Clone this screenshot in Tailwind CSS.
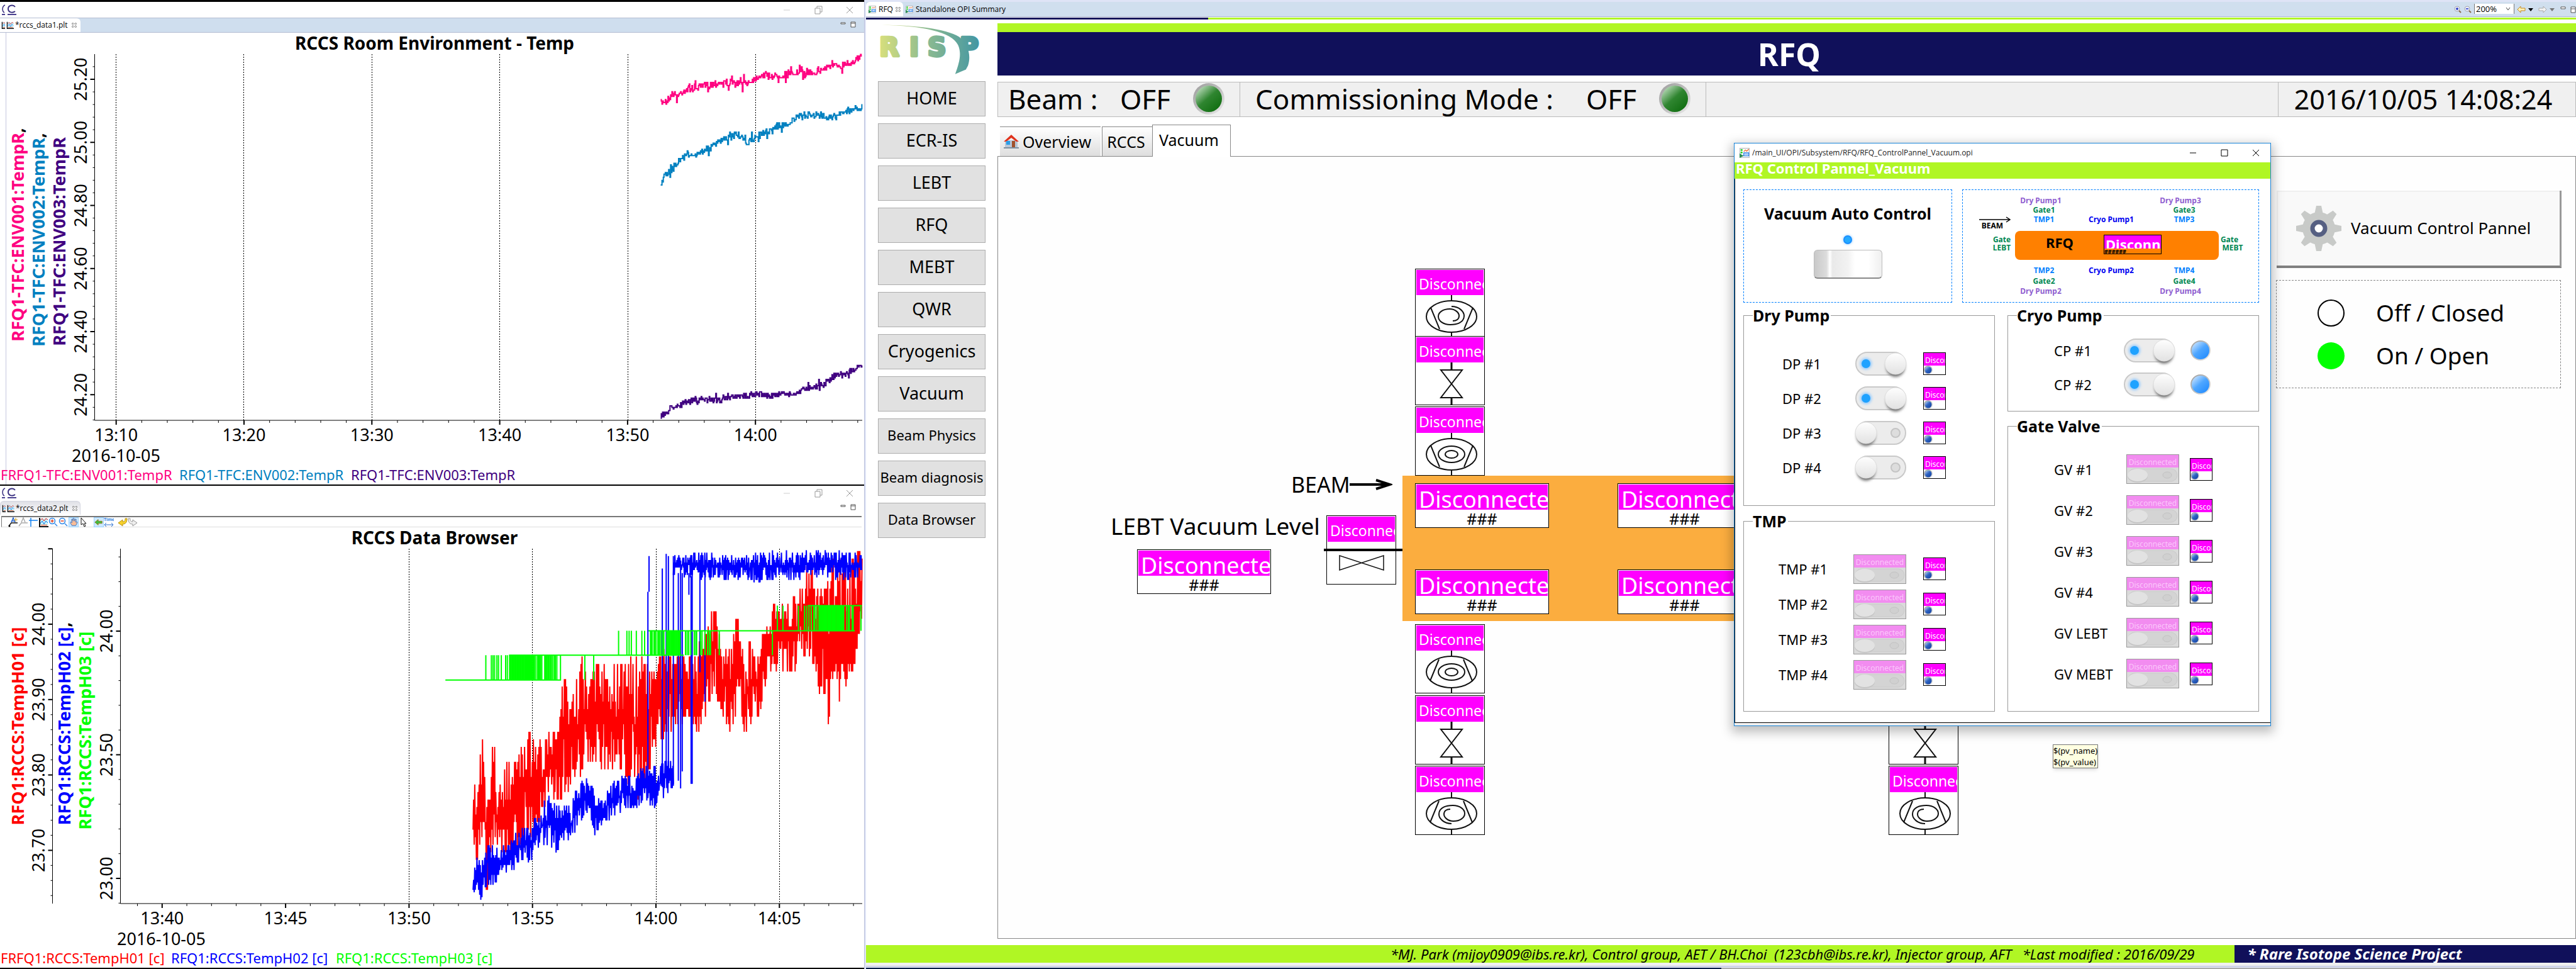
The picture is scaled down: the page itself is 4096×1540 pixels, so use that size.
<!DOCTYPE html>
<html lang="en">
<head>
<meta charset="utf-8">
<title>RFQ Vacuum</title>
<script src="https://cdn.jsdelivr.net/npm/@tailwindcss/browser@4"></script>
</head>
<body class="relative grid h-screen grid-cols-[1375fr_2721fr] overflow-hidden bg-white font-['Noto_Sans',sans-serif] text-black">

<svg class="absolute size-0" aria-hidden="true">
  <defs>
    <linearGradient id="logoFill" gradientUnits="userSpaceOnUse" x1="105" y1="0" x2="825" y2="0"><stop offset="0" stop-color="#d9e07c"/><stop offset=".45" stop-color="#8dbb90"/><stop offset="1" stop-color="#3a92a5"/></linearGradient>
    <linearGradient id="bezel" x1="0" y1="0" x2="1" y2="1"><stop offset="0" stop-color="#9d9d9d"/><stop offset=".5" stop-color="#bdbdbd"/><stop offset="1" stop-color="#eee"/></linearGradient>
    <linearGradient id="greenLed" x1=".1" y1=".1" x2=".8" y2=".9"><stop offset="0" stop-color="#b9dab9"/><stop offset=".5" stop-color="#2f8530"/><stop offset="1" stop-color="#137013"/></linearGradient>
    <linearGradient id="blueLed" x1=".1" y1=".1" x2=".8" y2=".9"><stop offset="0" stop-color="#c3e0ff"/><stop offset=".5" stop-color="#4ea6ff"/><stop offset="1" stop-color="#2990ff"/></linearGradient>
    <linearGradient id="darkLed" x1=".1" y1=".1" x2=".8" y2=".9"><stop offset="0" stop-color="#a9c4ee"/><stop offset=".5" stop-color="#2d62c0"/><stop offset="1" stop-color="#1848a8"/></linearGradient>
    <linearGradient id="knob" x1="0" y1="0" x2="0" y2="1"><stop offset="0" stop-color="#fefefe"/><stop offset="1" stop-color="#e2e2e2"/></linearGradient>
    <filter id="soft" x="-50%" y="-50%" width="200%" height="200%"><feGaussianBlur stdDeviation="2"/></filter>
    <symbol id="plot" viewBox="0 0 16 16"><path d="M2 1v14h14" fill="none" stroke="#111" stroke-width="2"/><path d="M3 2h12v11H3z" fill="#c9f5fb"/><path d="M3 5l3-3 3 4 3-4 3 2" fill="none" stroke="#e01010"/><path d="M3 10l3-4 3 5 3-5 3 3" fill="none" stroke="#0a6ae0"/><path d="M4 12.500h10" stroke="#f04010"/></symbol>
    <symbol id="opi" viewBox="0 0 24 24"><path d="M1 1h22v22H1z" fill="#fff" stroke="#b9bec2" stroke-width="2"/><circle cx="5" cy="5" r="2.500" fill="#2bd42b"/><circle cx="5" cy="11" r="2.500" fill="#2bd42b"/><path d="M10 9l4-4 3 3 5-5" fill="none" stroke="#f07038" stroke-width="2"/><path d="M10 12h12v7H10z" fill="#fff" stroke="#2a7fe8" stroke-width="2"/><path d="M12 15.500h8" stroke="#2a7fe8" stroke-width="2" stroke-dasharray="2 1"/><path d="M0 13l10 6-10 5z" fill="#2c8c55"/></symbol>
    <symbol id="closeX" viewBox="0 0 10 10"><path d="M1 1h2l2 2 2-2h2v2L7 5l2 2v2H7L5 7 3 9H1V7l2-2-2-2z" fill="#fff" stroke="#555"/></symbol>
    <symbol id="brand" viewBox="0 0 28 20"><path d="M8 2C3 4 3 12 7 14" fill="none" stroke="#3a3080" stroke-width="1.500"/><path d="M24 5C21 1 13 2 13 8c0 6 7 7 11 4" fill="none" stroke="#3a3080" stroke-width="2"/><path d="M3 17h5M12 17h14" stroke="#4a4090" stroke-width="2"/></symbol>
  </defs>
</svg>

<div class="grid min-h-0 min-w-0 grid-rows-2 border-r border-[#b9bfda] bg-white">

  <section class="flex min-h-0 flex-col border-t-[3px] border-black" aria-label="RCCS Room Environment">
    <header class="flex h-[25px] shrink-0 items-center justify-between pr-4">
      <svg class="h-5 w-7"><use href="#brand"/></svg>
      <div class="flex items-center gap-9 text-[#999]">
        <button aria-label="Minimize"><svg class="size-3.5" viewBox="0 0 14 14" fill="none" stroke="#ccc"><path d="M2 7h10"/></svg></button>
        <button aria-label="Restore"><svg class="size-3.5" viewBox="0 0 14 14" fill="none" stroke="#999"><path d="M2 4h8v9H2zM5 4V1h8v9h-3"/></svg></button>
        <button aria-label="Close"><svg class="size-3.5" viewBox="0 0 14 14" fill="none" stroke="#999"><path d="M2 2l10 10M12 2L2 12"/></svg></button>
      </div>
    </header>
    <div class="flex h-6 shrink-0 items-stretch justify-between border-y border-[#b5bdd3] bg-[#cfdeee]">
      <div class="flex w-[128px] items-center gap-0.5 rounded-tr-md bg-white pl-0.5 font-['Open_Sans',sans-serif] text-[12px]">
        <svg class="h-3 w-1.5"><use href="#plot" width="12" height="12"/></svg>
        <svg class="size-3"><use href="#plot"/></svg>*rccs_data1.plt
        <button class="ml-1" aria-label="Close tab"><svg class="size-2"><use href="#closeX"/></svg></button>
      </div>
      <svg class="mt-1 mr-3 h-3 w-7" viewBox="0 0 28 12" fill="#fff" stroke="#555"><path d="M3 3h7v2H3zM19 2h7v8h-7zM19 4h7"/></svg>
    </div>
    <svg id="chart1" class="min-h-0 w-full flex-1" viewBox="0 52 1374 718" preserveAspectRatio="xMinYMin meet"></svg>
  </section>

  <section class="flex min-h-0 flex-col border-t-2 border-black" aria-label="RCCS Data Browser">
    <header class="flex h-6 shrink-0 items-center justify-between pr-4">
      <svg class="h-5 w-7"><use href="#brand"/></svg>
      <div class="flex items-center gap-9">
        <button aria-label="Minimize"><svg class="size-3.5" viewBox="0 0 14 14" fill="none" stroke="#ccc"><path d="M2 7h10"/></svg></button>
        <button aria-label="Restore"><svg class="size-3.5" viewBox="0 0 14 14" fill="none" stroke="#999"><path d="M2 4h8v9H2zM5 4V1h8v9h-3"/></svg></button>
        <button aria-label="Close"><svg class="size-3.5" viewBox="0 0 14 14" fill="none" stroke="#999"><path d="M2 2l10 10M12 2L2 12"/></svg></button>
      </div>
    </header>
    <div class="flex h-6 shrink-0 items-start justify-between">
      <div class="flex h-[22px] w-[128px] items-center gap-0.5 rounded-t-md border-x border-t border-[#d4d6e0] bg-linear-to-b from-[#dfe0e6] to-white pl-0.5 font-['Open_Sans',sans-serif] text-[12px]">
        <svg class="h-3 w-1.5"><use href="#plot" width="12" height="12"/></svg>
        <svg class="size-3"><use href="#plot"/></svg>*rccs_data2.plt
        <button class="ml-1" aria-label="Close tab"><svg class="size-2"><use href="#closeX"/></svg></button>
      </div>
      <svg class="mt-1 mr-3 h-3 w-7" viewBox="0 0 28 12" fill="#fff" stroke="#555"><path d="M3 3h7v2H3zM19 2h7v8h-7zM19 4h7"/></svg>
    </div>
    <div class="mr-1 ml-0.5 flex h-[18px] shrink-0 items-center border-t-2 border-b border-l border-[#777] border-b-[#ddd] pl-2.5">
      <button aria-label="Add annotation"><svg class="size-4" viewBox="0 0 16 16"><path d="M1 14l4-5h10" fill="none" stroke="#111" stroke-width="1.500"/><circle cx="2" cy="14" r="1.500"/><path d="M5 8l3-7 3 7M6 6h4" fill="none" stroke="#2060d0" stroke-width="1.500"/><path d="M12 1v6M9 4h6" stroke="#d0a020"/></svg></button>
      <button aria-label="Remove annotation"><svg class="size-4" viewBox="0 0 16 16" fill="none" stroke="#aaa" stroke-width="1.500"><path d="M1 14l4-5h10M5 8l3-7 3 7"/></svg></button>
      <button aria-label="Crosshair"><svg class="size-4" viewBox="0 0 16 16" stroke="#1080f0" stroke-width="1.500"><path d="M4 1v14M1 5h14"/></svg></button>
      <button aria-label="Auto scale"><svg class="size-4"><use href="#plot"/></svg></button>
      <button aria-label="Zoom in"><svg class="size-4" viewBox="0 0 16 16" fill="none" stroke="#2a86e8" stroke-width="1.500"><circle cx="6" cy="6" r="4.500"/><path d="M10 10l4 4"/><path d="M3.500 6h5M6 3.500v5" stroke="#e04020"/></svg></button>
      <button aria-label="Zoom out"><svg class="size-4" viewBox="0 0 16 16" fill="none" stroke="#2a86e8" stroke-width="1.500"><circle cx="6" cy="6" r="4.500"/><path d="M10 10l4 4"/><path d="M3.500 6h5" stroke="#e04020"/></svg></button>
      <button class="border border-[#99d1ff] bg-[#cce8ff]" aria-label="Pan"><svg class="size-3.5" viewBox="0 0 16 16"><path d="M5 14L2 9l1-2 2 2-1-6 2-1 1 4V1h2l1 5 1-4 2 1-1 5 2-1 1 1-3 6z" fill="#fbbd97" stroke="#2a70c8"/></svg></button>
      <button aria-label="Select"><svg class="size-4" viewBox="0 0 16 16" fill="#fff" stroke="#111"><path d="M4 1v11l3-2 2 5 2-1-2-4h3z"/></svg></button>
      <button class="ml-2 border border-[#99d1ff] bg-[#cce8ff]" aria-label="Scroll"><svg class="size-3.5" viewBox="0 0 16 16" fill="#3bc040" stroke="#a06a10"><path d="M1 8l6-5v3h7v4H7v3z"/></svg></button>
      <button aria-label="Time span"><svg class="size-4" viewBox="0 0 16 16"><text x="0" y="6" font-size="7" fill="#2a7fe0" font-weight="bold">Time</text><path d="M1 12h14M4 9l-3 3 3 3M12 9l3 3-3 3" fill="none" stroke="#2a70d0"/></svg></button>
      <button class="ml-1.5" aria-label="Undo"><svg class="size-4" viewBox="0 0 16 16" fill="#f6d02a" stroke="#b8941a"><path d="M15 2c0 6-2 9-7 9v3L1 9l7-5v3c3 0 4-1 4-5z"/></svg></button>
      <button aria-label="Redo"><svg class="size-4" viewBox="0 0 16 16" fill="#eee" stroke="#999"><path d="M1 2c0 6 2 9 7 9v3l7-5-7-5v3C5 7 4 6 4 2z"/></svg></button>
    </div>
    <svg id="chart2" class="min-h-0 w-full flex-1" viewBox="0 838 1374 702" preserveAspectRatio="xMinYMin meet"></svg>
  </section>
</div>

<div class="flex min-h-0 min-w-0 flex-col border-t-[3px] border-l-2 border-[#dfe4f6] bg-white">
  <div class="flex h-6 shrink-0 items-stretch justify-between border-b border-[#b0b8cf] bg-[#d0dfee] font-['Open_Sans',sans-serif] text-[12px]">
    <div class="flex">
      <button class="flex w-[59px] items-center gap-1 rounded-t-md bg-white pl-1"><svg class="size-3"><use href="#opi"/></svg>RFQ<svg class="size-2"><use href="#closeX"/></svg></button>
      <button class="flex items-center gap-1 pl-1"><svg class="size-3"><use href="#opi"/></svg>Standalone OPI Summary</button>
    </div>
    <div class="flex items-center gap-1">
      <button aria-label="Zoom in"><svg class="size-3" viewBox="0 0 12 12" fill="#e8ecff" stroke="#aaa"><circle cx="5" cy="5" r="4"/><path d="M8 8l3 3" stroke="#8a6a4a" stroke-width="2"/><path d="M3 5h4M5 3v4" stroke="#2030c0" stroke-width="1.500"/></svg></button>
      <button aria-label="Zoom out"><svg class="size-3" viewBox="0 0 12 12" fill="#e8ecff" stroke="#aaa"><circle cx="5" cy="5" r="4"/><path d="M8 8l3 3" stroke="#8a6a4a" stroke-width="2"/><path d="M3 5h4" stroke="#2030c0" stroke-width="1.500"/></svg></button>
      <div class="relative">
        <select class="h-4 w-16 appearance-none border-x border-[#777] bg-white pl-0.5 text-[13px] leading-4" aria-label="Zoom level"><option>200%</option></select>
        <svg class="absolute top-1 right-1.5 size-2" viewBox="0 0 8 8" fill="none" stroke="#444"><path d="M1 2l3 4 3-4"/></svg>
      </div>
      <button aria-label="Back"><svg class="h-3 w-3.5" viewBox="0 0 14 12" fill="#fff2b8" stroke="#c48a20"><path d="M1 6l5-5v3h7v4H6v3z"/></svg></button>
      <svg class="size-2" viewBox="0 0 8 8"><path d="M0 2h8L4 7z"/></svg>
      <button class="ml-1" aria-label="Forward"><svg class="h-3 w-3.5" viewBox="0 0 14 12" fill="#f2f2f2" stroke="#aaa"><path d="M13 6L8 1v3H1v4h7v3z"/></svg></button>
      <svg class="size-2" viewBox="0 0 8 8" fill="#777"><path d="M0 2h8L4 7z"/></svg>
      <svg class="ml-1 h-3 w-[26px]" viewBox="0 0 26 12" fill="#fff" stroke="#555"><path d="M2 2h7v3H2zM18 2h7v9h-7zM18 5h7"/></svg>
    </div>
  </div>
  <div class="mt-px flex h-[3px] shrink-0"><div class="w-[544px] bg-[#10105a]"></div><div class="flex-1 bg-[#b0f624]"></div></div>

  <div class="mt-[6px] flex min-h-0 flex-1">
    <aside class="flex w-[209px] shrink-0 flex-col pl-[19px]">
      <svg class="mt-0.5 h-20 w-[171px]" viewBox="105 165 720 337" role="img" aria-label="RISP">
        <g fill="url(#logoFill)">
          <text x="114 316 438 652" y="377" font-family="DejaVu Sans" font-weight="bold" font-size="172" stroke="url(#logoFill)" stroke-width="18" stroke-linejoin="round">RISP</text>
          <path d="M130 168C330 168 560 190 650 248C710 300 730 370 708 440L694 466L622 497C655 410 665 350 640 300C600 215 400 172 130 168z"/>
        </g>
      </svg>
      <nav id="nav" class="mt-[10px] flex w-[171px] flex-col gap-[11px]"></nav>
    </aside>

    <main class="flex min-w-0 flex-1 flex-col">
      <div class="h-3.5 shrink-0 bg-[#b0f624]"></div>
      <h1 class="flex h-[69px] shrink-0 items-center justify-center bg-[#10105a] pl-2 text-[50px] leading-none font-bold text-white">RFQ</h1>
      <div class="mt-2.5 flex h-[56px] shrink-0 divide-x divide-[#bbb] border border-[#bbb] bg-[#f0f0f0] text-[44px] leading-none">
        <div class="flex w-[385px] items-center pr-6 pl-4 pb-0.5">Beam :<span class="mr-9 ml-auto">OFF</span><svg class="size-[50px]" viewBox="0 0 50 50"><circle cx="25" cy="25" r="25" fill="url(#bezel)"/><circle cx="25" cy="25" r="21" fill="url(#greenLed)"/></svg></div>
        <div class="flex w-[741px] items-center pr-6 pl-6 pb-0.5">Commissioning Mode :<span class="mr-9 ml-auto">OFF</span><svg class="size-[50px]" viewBox="0 0 50 50"><circle cx="25" cy="25" r="25" fill="url(#bezel)"/><circle cx="25" cy="25" r="21" fill="url(#greenLed)"/></svg></div>
        <div class="flex-1"></div>
        <div class="flex w-[472px] items-center justify-center pr-3 pb-0.5 text-[43px]">2016/10/05 14:08:24</div>
      </div>
      <div class="mt-3 flex h-[50px] shrink-0 items-end text-[25px] leading-none" role="tablist">
        <button class="ml-1 flex h-[47px] w-[160px] items-center gap-1 border-t border-[#888] bg-linear-to-b from-white to-[#dedede] pl-1" role="tab">
          <svg class="h-6 w-7" viewBox="0 0 28 24"><path d="M4 10h20v11H4z" fill="#b9c6d6"/><path d="M2 12L14 1l12 11h-4l-8-6-8 6z" fill="#e0321c"/><path d="M6 11h6v6H6z" fill="#2a9de8"/><path d="M15 11h5v10h-5z" fill="#a0522d"/><path d="M2 21h24v2H2z" fill="#7d8fa0"/></svg>Overview</button>
        <button class="ml-0.5 h-[47px] w-[80px] border-t border-l border-[#888] bg-linear-to-b from-white to-[#dedede] pr-1" role="tab">RCCS</button>
        <button class="z-10 h-[51px] w-[125px] -mb-px border-x border-t border-[#888] bg-white pr-2 pb-1" role="tab" aria-selected="true">Vacuum</button>
      </div>

      <div id="canvas" class="relative min-h-0 flex-1 border border-[#888] bg-[#fefefe]">
        <div class="absolute top-[507px] left-[643px] h-[231px] w-[900px] bg-[#fbad3f]"></div>
        <p class="absolute top-[499px] left-[466px] text-[34px] leading-[44px]">BEAM</p>
        <svg class="absolute top-[511px] left-[559px] h-5 w-[68px]" viewBox="0 0 68 20" fill="none" stroke="#000" stroke-width="4"><path d="M0 10h64M42 3l22 7-22 7"/></svg>
        <p class="absolute top-[562px] left-[179px] text-[37px] leading-[50px] whitespace-nowrap">LEBT Vacuum Level</p>

        <button class="absolute top-[54px] right-[22px] flex h-[123px] w-[453px] items-center border-r-[3px] border-b-4 border-[#999] border-b-[#808080] bg-[#f9f9f9] pl-[30px] text-[26px] shadow-[inset_2px_2px_0_#f0f0f0]">
          <svg class="mr-3.5 size-[74px]" viewBox="-37 -37 74 74"><g fill="#c8cac8"><circle r="26"/><path id="cog" d="M-7 -22L-4 -36h8L7 -22zM-7 22L-4 36h8L7 22z"/><use href="#cog" transform="rotate(45)"/><use href="#cog" transform="rotate(90)"/><use href="#cog" transform="rotate(135)"/></g><circle r="10" fill="#fff" stroke="#555f82" stroke-width="7"/></svg>
          Vacuum Control Pannel
        </button>
        <div class="absolute top-[196px] right-[23px] flex h-[172px] w-[453px] flex-col justify-center gap-3 border border-dashed border-[#888] pl-[65px] text-[37px] leading-[56px]">
          <div class="flex items-center gap-[50px]"><span class="size-[43px] rounded-full border-2 border-black bg-white"></span>Off / Closed</div>
          <div class="flex items-center gap-[50px]"><span class="size-[43px] rounded-full bg-[#00ff00]"></span>On / Open</div>
        </div>
        <div class="absolute top-[934px] left-[1677px] border border-[#777] bg-[#ffffe1] text-[13px] leading-[18px] shadow-md">$(pv_name)<br>$(pv_value)</div>
      </div>
    </main>
  </div>

  <footer class="mt-2.5 flex h-7 shrink-0 items-center text-[22px] leading-none italic">
    <p class="flex h-full flex-[2179] items-center justify-end bg-[#b0f624] pr-16 whitespace-pre">*MJ. Park (mijoy0909@ibs.re.kr), Control group, AET / BH.Choi  (123cbh@ibs.re.kr), Injector group, AFT   *Last modified : 2016/09/29</p>
    <p class="flex h-full flex-[539] items-center bg-[#10105a] pl-5 text-[24px] font-bold text-white">* Rare Isotope Science Project</p>
  </footer>
  <div class="h-[5px] shrink-0 bg-[#f0f0f0]"></div>
  <div class="h-[3px] shrink-0 border-t border-[#b9bfda] bg-[#dfe4f6]"></div>
  <div class="flex h-0.5 shrink-0"><div class="flex-1 bg-[#061c48]"></div><div class="flex-1 bg-[#aaa]"></div></div>
</div>

<section class="absolute top-[227px] left-[2757px] z-20 flex h-[927px] w-[854px] flex-col border border-[#1883d7] bg-white shadow-[0_6px_16px_4px_rgba(0,0,0,0.25)]" role="dialog" aria-label="RFQ Control Pannel_Vacuum">
  <header class="flex h-[30px] shrink-0 items-center pr-4 pl-2 font-['Open_Sans',sans-serif] text-[12px] text-[#222]">
    <svg class="mr-1 size-4"><use href="#opi"/></svg>/main_UI/OPI/Subsystem/RFQ/RFQ_ControlPannel_Vacuum.opi
    <div class="ml-auto flex gap-9">
      <button aria-label="Minimize"><svg class="size-3.5" viewBox="0 0 14 14" stroke="#000"><path d="M2 7h10"/></svg></button>
      <button aria-label="Maximize"><svg class="size-3.5" viewBox="0 0 14 14" fill="none" stroke="#000"><path d="M2 2h10v10H2z"/></svg></button>
      <button aria-label="Close"><svg class="size-3.5" viewBox="0 0 14 14" stroke="#000"><path d="M2 2l10 10M12 2L2 12"/></svg></button>
    </div>
  </header>
  <h2 class="h-[26px] shrink-0 bg-[#b0f624] pl-0.5 text-[22px] leading-[18px] font-bold text-white">RFQ Control Pannel_Vacuum</h2>
  <div class="flex-1 border-b border-l border-black pt-[17px] pr-[18px] pl-[13px]">
    <div class="flex h-[180px] gap-4">
      <div class="flex w-[332px] flex-col items-center border border-dashed border-[#0080ff] pt-[19px]">
        <p class="text-[25px] leading-9 font-bold">Vacuum Auto Control</p>
        <span class="mt-[17px] size-[14px] rounded-full border-2 border-[#1a8fff] bg-[#25aaff] shadow-[0_0_4px_#8cc8ff]"></span>
        <button class="mt-[9px] h-[46px] w-[109px] rounded-md border border-b-2 border-[#bbb] border-b-[#888] bg-[linear-gradient(90deg,#c9c9c9,#dcdcdc_18%,#fff_23%,#e9e9e9_27%,#f2f2f2_50%,#fff_60%,#fff_80%,#efefef)]" aria-label="Vacuum Auto Control"></button>
      </div>
      <div id="mimic" class="relative flex-1 border border-dashed border-[#0080ff] text-[12px] font-bold">
        <svg class="absolute top-[42px] left-[26px] h-2.5 w-[50px]" viewBox="0 0 50 10" fill="none" stroke="#000" stroke-width="1.500"><path d="M0 5h49M43 1l6 4-6 4"/></svg>
        <div class="absolute top-[65px] left-[83px] h-[46px] w-[324px] rounded-lg bg-[#ff8000]">
          <span class="absolute top-1 left-[49px] text-[22px] leading-7">RFQ</span>
          <div class="absolute top-1.5 left-[141px] h-[31px] w-[92px] overflow-hidden border border-black">
            <div class="h-[21px] overflow-hidden bg-[#ff00ff] pl-0.5 text-[22px] leading-7 text-white">Disconnected</div>
            <div class="text-[9px] leading-[10px]">######</div>
          </div>
        </div>
      </div>
    </div>
    <div class="mt-[3px] flex justify-between">
      <div class="flex w-[400px] flex-col gap-[7px]">
        <fieldset class="h-[320px] border border-[#999]"><legend class="ml-[14px] pr-0.5 text-[25px] leading-[34px] font-bold">Dry Pump</legend><div class="pt-8 pl-[61px]" data-group="dp"></div></fieldset>
        <fieldset class="h-[320px] border border-[#999]"><legend class="ml-[14px] pr-0.5 text-[25px] leading-[34px] font-bold">TMP</legend><div class="pt-[31px] pl-[55px]" data-group="tmp"></div></fieldset>
      </div>
      <div class="flex w-[400px] flex-col gap-[6px]">
        <fieldset class="h-[170px] border border-[#999]"><legend class="ml-[14px] pr-0.5 text-[25px] leading-[34px] font-bold">Cryo Pump</legend><div class="pt-3 pl-[73px]" data-group="cp"></div></fieldset>
        <fieldset class="h-[471px] border border-[#999]"><legend class="ml-[14px] pr-0.5 text-[25px] leading-[34px] font-bold">Gate Valve</legend><div class="pt-[19px] pl-[73px]" data-group="gv"></div></fieldset>
      </div>
    </div>
  </div>
  <div class="h-1 shrink-0 bg-[#f0f0f0]"></div>
</section>

<script>
// Navigation
document.getElementById('nav').innerHTML = ['HOME','ECR-IS','LEBT','RFQ','MEBT','QWR','Cryogenics','Vacuum','Beam Physics','Beam diagnosis','Data Browser']
  .map((t, i) => `<button class="h-14 border border-[#adadad] bg-[#e1e1e1] pb-1 ${i > 7 ? 'text-[22px]' : 'text-[27px]'} leading-none whitespace-nowrap">${t}</button>`).join('');

// Diagram nodes
const body = '<path d="M56 0v9M56 59v9"/><ellipse cx="56" cy="34" rx="40" ry="25"/><path d="M23 20l14 34M90 20l-14 34"/>';
const symbols = {
  tmp: body + '<ellipse cx="56" cy="34" rx="21" ry="13"/><ellipse cx="56" cy="34" rx="10" ry="6"/>',
  dry: body + '<path d="M56 18C68 18 76 26 76 33C76 44 64 47 54 47C43 47 35 41 35 34C35 27 43 22 53 22C62 22 68 28 68 33C68 38 64 41 58 41"/>',
  gate: '<path d="M56 0v12M56 56v12" stroke-width="3"/><path d="M39 12h34L39 56h34z"/>',
  side: '<path d="M19 22v23l70-23v23z" stroke-width="1.500"/>'
};
const flip = (s, f) => f ? `<g transform="rotate(180 56 34)">${s}</g>` : s;
const nodes = [
  [663,178,'dry',0],[663,285,'gate',0],[663,397,'tmp',0],
  [663,743,'tmp',1],[663,856,'gate',0],[663,968,'dry',1],
  [1416,856,'gate',0],[1416,968,'dry',1],[522,570,'side',0]
];
let html = nodes.map(([x, y, k, f]) => `<div class="absolute h-[110px] w-[111px] overflow-hidden border border-black bg-white p-px" style="left:${x}px;top:${y}px">
  <div class="h-10 bg-[#ff00ff] pl-1 text-[23px] leading-[44px] text-white">Disconnected</div>
  <svg class="block h-[68px] w-[108px]" viewBox="0 0 108 68" fill="none" stroke="#111" stroke-width="2">${flip(symbols[k], f)}</svg></div>`).join('');
html += [[663,519],[985,519],[663,656],[985,656],[221,624]].map(([x, y]) => `<div class="absolute h-[71px] w-[213px] overflow-hidden border border-black bg-white p-px" style="left:${x}px;top:${y}px">
  <div class="h-10 overflow-hidden bg-[#ff00ff] pl-1 text-[36px] leading-[48px] text-white">Disconnected</div>
  <div class="text-center text-[25px] leading-7">###</div></div>`).join('');
html += '<div class="absolute top-[623px] left-[518px] h-1 w-[125px] bg-black"></div>';
document.getElementById('canvas').insertAdjacentHTML('beforeend', html);

// Overview inside the control panel
const P = 'text-[#8f5fd0]', G = 'text-[#008752]', T = 'text-[#0080ff]', C = 'text-[#0000f0]', K = 'text-black';
document.getElementById('mimic').insertAdjacentHTML('beforeend', [
  [124,17,'Dry Pump1',P],[129,32,'Gate1',G],[129,47,'TMP1',T],[346,17,'Dry Pump3',P],[352,32,'Gate3',G],[352,47,'TMP3',T],
  [236,47,'Cryo Pump1',C],[47,57,'BEAM',K],[62,79,'Gate',G],[62,92,'LEBT',G],[424,79,'Gate',G],[429,92,'MEBT',G],
  [129,128,'TMP2',T],[129,145,'Gate2',G],[124,161,'Dry Pump2',P],[352,128,'TMP4',T],[352,145,'Gate4',G],[346,161,'Dry Pump4',P],[236,128,'Cryo Pump2',C]
].map(([x, y, t, c]) => `<span class="absolute w-20 -translate-x-1/2 -translate-y-1/2 text-center leading-4 ${c}" style="left:${x}px;top:${y}px">${t}</span>`).join(''));

// Control rows
const art = on => `<path d="M19 1h43a18 18 0 0 1 0 36H19a18 18 0 0 1 0-36z" fill="#ececec" stroke="#c9c9c9" stroke-width="2"/>` + (on
  ? '<circle cx="17" cy="19" r="9" fill="#8cc8ff" filter="url(#soft)"/><circle cx="17" cy="19" r="7" fill="#1fa2ff"/><ellipse cx="64" cy="24" rx="15" ry="16" fill="#777" filter="url(#soft)"/><circle cx="64" cy="19" r="17" fill="url(#knob)" stroke="#ddd"/>'
  : '<circle cx="64" cy="19" r="7" fill="#ddd" stroke="#c4c4c4" stroke-width="2"/><ellipse cx="17" cy="24" rx="15" ry="16" fill="#777" filter="url(#soft)"/><circle cx="17" cy="19" r="17" fill="url(#knob)" stroke="#ddd"/>');
const toggle = (id, on) => `<span class="relative block h-[42px] w-[82px]"><svg class="h-[42px] w-[82px] overflow-visible" viewBox="0 -2 82 42">${art(on)}</svg><input id="${id}" type="checkbox" ${on ? 'checked' : ''} class="absolute inset-0 appearance-none"></span>`;
const offline = id => `<span class="relative block h-[47px] w-[84px] overflow-hidden border border-[#999] bg-[#dadada]"><span class="block h-5 bg-[#f28cf0] text-center text-[12px] leading-[23px] text-[#fbc8fb]">Disconnected</span><svg class="h-[25px] w-[82px]" viewBox="0 0 82 25"><rect x="2" y="2" width="78" height="20" rx="10" fill="#d4d4d4" stroke="#cacaca"/><ellipse cx="17" cy="14" rx="16" ry="10" fill="#c6c6c6"/><ellipse cx="17" cy="12" rx="16" ry="10" fill="#e2e2e2"/><ellipse cx="64" cy="12" rx="7" ry="5" fill="#d0d0d0" stroke="#c2c2c2"/></svg><input id="${id}" type="checkbox" disabled class="absolute inset-0 appearance-none"></span>`;
const mini = '<span class="block h-[36px] w-[36px] overflow-hidden border border-black bg-white"><span class="block h-5 bg-[#ff00ff] pl-0.5 text-[12px] leading-6 text-white">Disconnected</span><svg class="size-3.5" viewBox="0 0 14 14"><circle cx="7" cy="7" r="7" fill="url(#bezel)"/><circle cx="7" cy="7" r="5.500" fill="url(#darkLed)"/></svg></span>';
const led = '<svg class="size-8" viewBox="0 0 32 32"><circle cx="16" cy="16" r="16" fill="url(#bezel)"/><circle cx="16" cy="16" r="14" fill="url(#blueLed)"/></svg>';
const groups = {
  dp: ['h-[55px] grid-cols-[116px_108px_auto]', ['DP #1','DP #2','DP #3','DP #4'], (id, i) => toggle(id, i < 2) + mini],
  tmp: ['h-[56px] grid-cols-[119px_111px_auto]', ['TMP #1','TMP #2','TMP #3','TMP #4'], id => offline(id) + mini],
  cp: ['h-[54px] grid-cols-[111px_106px_auto]', ['CP #1','CP #2'], id => toggle(id, true) + led],
  gv: ['h-[65px] grid-cols-[115px_101px_auto]', ['GV #1','GV #2','GV #3','GV #4','GV LEBT','GV MEBT'], id => offline(id) + mini]
};
for (const [key, [cls, names, parts]] of Object.entries(groups))
  document.querySelector(`[data-group=${key}]`).innerHTML = names.map((n, i) =>
    `<div class="grid ${cls} items-center"><label for="${key}${i}" class="text-[22px] leading-none">${n}</label>${parts(key + i, i)}</div>`).join('');

// Charts
let seed = 7;
const rnd = () => (seed = (seed * 16807) % 2147483647) / 2147483647;
const text = (x, y, s, o = 'font-size="27"') => `<text x="${x}" y="${y}" ${o}>${s}</text>`;
const vtext = (x, y, s, o = '') => `<text transform="translate(${x} ${y}) rotate(-90)" text-anchor="middle" font-size="27" ${o}>${s}</text>`;
const line = (a, b, c, d, o = '') => `<path d="M${a} ${b}L${c} ${d}" stroke="#000" ${o}/>`;
const at = (k, x, n) => { let i = 0; while (i < k.length - 2 && x > k[i + 1][0]) i++; const a = k[i], b = k[i + 1], t = Math.min(1, (x - a[0]) / (b[0] - a[0])); return a[n] + (b[n] - a[n]) * t; };
const path = (pts, color, sx, sy, oy, w = 2) => `<path fill="none" stroke="${color}" stroke-width="${w}" d="M${pts.map(([x, y]) => (x * sx).toFixed(1) + ' ' + (oy + y * sy).toFixed(1)).join('L')}"/>`;
const SX = .8798;
function wander(k, amp) {
  const out = []; let y;
  for (let x = k[0][0]; x <= k[k.length - 1][0]; x += 1.2) {
    const r = rnd() - .5, big = rnd() < .08 ? 2.4 : 1;
    const v = Math.round((at(k, x, 1) + r * amp * big) / 5) * 5;
    if (y !== undefined) out.push([x, y]);
    out.push([x, v]); y = v;
  }
  return out;
}
function band(k, q, step, p = 1) {
  const out = []; let up = false;
  for (let x = k[0][0]; x <= k[k.length - 1][0]; x += step) {
    const hi = at(k, x, 1), lo = at(k, x, 2), r = rnd() ** p * .5;
    const v = up ? hi + (lo - hi) * r : lo - (lo - hi) * r;
    out.push([x, Math.round(v / q) * q]); up = !up;
  }
  return out;
}
function axisX(y, first, step, labels, x0) {
  let s = line(x0, y, 1371, y);
  for (let i = -5; i < 40; i++) { const x = first + i * step / 5; if (x > x0 && x < 1371) s += line(x, y, x, y + (i % 5 ? 4 : 7), i % 5 ? '' : 'stroke-width="2"'); }
  labels.forEach((t, i) => s += text(first + i * step, y + 33, t, 'text-anchor="middle" font-size="27"'));
  return s;
}
function axisY(x, top, bottom, first, step, labels) {
  let s = line(x, top, x, bottom);
  for (let i = -10; i < 40; i++) { const y = first + i * step / 5; if (y > top && y < bottom) s += line(x - (i % 5 ? 3 : 7), y, x, y, i % 5 ? '' : 'stroke-width="2"'); }
  labels.forEach((t, i) => s += vtext(x - 13, first + i * step, t));
  return s;
}
const grid = (xs, a, b) => xs.map(x => line(x, a, x, b, 'stroke-width="1" stroke-dasharray="2 2"')).join('');

// Room temperature
let c = '<path d="M9.500 52v718" stroke="#c4c6de"/>' + text(691, 79, 'RCCS Room Environment - Temp', 'text-anchor="middle" font-weight="bold" font-size="28"');
c += grid([184.5, 387.5, 591.5, 794.5, 998.5, 1201.5], 86, 668);
c += axisX(668, 184.7, 203.3, ['13:10','13:20','13:30','13:40','13:50','14:00'], 150.5);
c += axisY(150.5, 86, 668, 126, 100.25, ['25.20','25.00','24.80','24.60','24.40','24.20']);
c += vtext(38, 373, 'RFQ1-TFC:ENV001:TempR<tspan fill="#000">,</tspan>', 'font-weight="bold" fill="#ff0080"');
c += vtext(71, 381, 'RFQ1-TFC:ENV002:TempR<tspan fill="#000">,</tspan>', 'font-weight="bold" fill="#0080c0"');
c += vtext(104, 384, 'RFQ1-TFC:ENV003:TempR', 'font-weight="bold" fill="#400080"');
c += text(114, 734, '2016-10-05');
c += '<g font-size="22"><text x="1" y="763" fill="#ff0080">FRFQ1-TFC:ENV001:TempR</text><text x="285" y="763" fill="#0080c0">RFQ1-TFC:ENV002:TempR</text><text x="558" y="763" fill="#400080">RFQ1-TFC:ENV003:TempR</text></g>';
c += path(wander([[1194,330],[1205,322],[1215,300],[1225,308],[1235,290],[1255,283],[1275,275],[1300,265],[1340,270],[1355,262],[1366,252],[1375,240],[1400,245],[1420,240],[1440,235],[1480,230],[1495,215],[1520,210],[1540,200],[1550,190],[1558,178]], 22), '#ff0080', SX, .4943, 0);
c += path(wander([[1194,598],[1197,575],[1205,560],[1215,540],[1230,512],[1245,490],[1253,510],[1262,490],[1285,475],[1300,455],[1332,430],[1342,450],[1350,460],[1366,440],[1385,425],[1405,405],[1420,402],[1440,378],[1465,368],[1500,374],[1512,375],[1530,355],[1558,345]], 20), '#0080c0', SX, .4943, 0);
c += path(wander([[1194,1340],[1205,1325],[1212,1310],[1235,1298],[1255,1285],[1300,1285],[1330,1278],[1366,1268],[1400,1273],[1415,1262],[1435,1270],[1455,1248],[1490,1235],[1510,1205],[1530,1200],[1558,1178]], 18), '#400080', SX, .4943, 0);
document.getElementById('chart1').innerHTML = c;

// Cooling water temperature
c = text(691, 865, 'RCCS Data Browser', 'text-anchor="middle" font-weight="bold" font-size="28"');
c += grid([650.5, 846.5, 1043.5, 1239.5], 872, 1436);
c += axisX(1436, 257.8, 196.3, ['13:40','13:45','13:50','13:55','14:00','14:05'], 191.5);
c += axisY(83.5, 872, 1436, 992, 119.8, ['24.00','23.90','23.80','23.70']);
c += axisY(191.5, 872, 1436, 1003, 196.5, ['24.00','23.50','23.00']);
c += vtext(38, 1154, 'RFQ1:RCCS:TempH01 [c]', 'font-weight="bold" fill="#ff0000"');
c += vtext(112, 1150, 'RFQ1:RCCS:TempH02 [c]<tspan fill="#000">,</tspan>', 'font-weight="bold" fill="#0000ff"');
c += vtext(145, 1161, 'RFQ1:RCCS:TempH03 [c]', 'font-weight="bold" fill="#00ff00"');
c += text(186, 1502, '2016-10-05');
c += '<g font-size="22"><text x="1" y="1531" fill="#ff0000">FRFQ1:RCCS:TempH01 [c]</text><text x="272" y="1531" fill="#0000ff">RFQ1:RCCS:TempH02 [c]</text><text x="534" y="1531" fill="#00ff00">RFQ1:RCCS:TempH03 [c]</text></g>';
c += line(0, 1539, 1374, 1539, 'stroke-width="2"');
const sy = .49252, red = band([[855,940,1170],[862,1040,1240],[871,800,1190],[880,965,1360],[884,960,1210],[893,800,1190],[896,980,1190],[915,900,1190],[938,880,1190],[948,790,1150],[970,830,1120],[990,810,1030],[1010,790,1010],[1020,580,1020],[1028,740,980],[1040,640,960],[1055,550,930],[1062,680,910],[1075,580,900],[1100,600,930],[1130,570,950],[1155,550,1020],[1180,610,890],[1190,550,830],[1215,540,790],[1240,570,760],[1260,540,810],[1280,450,720],[1290,380,660],[1305,510,740],[1320,540,810],[1335,390,740],[1345,540,820],[1360,500,760],[1375,540,760],[1385,380,620],[1405,400,600],[1430,360,620],[1450,340,580],[1465,200,560],[1475,350,630],[1497,320,780],[1504,210,660],[1510,330,640],[1523,205,740],[1535,290,630],[1545,210,600],[1558,220,430]], 24.3, 1, 2);
c += path(red, '#ff0000', SX, sy, 768);
const blue = band([[855,1260,1330],[863,1190,1300],[870,1230,1355],[880,1150,1300],[900,1180,1290],[920,1160,1260],[935,1110,1240],[950,1110,1230],[962,1090,1230],[975,1060,1175],[990,1000,1170],[1005,1040,1190],[1030,1040,1180],[1045,970,1100],[1060,950,1070],[1075,990,1160],[1090,1010,1100],[1110,960,1080],[1130,940,1050],[1150,940,1060],[1165,890,1020],[1185,910,1060],[1200,890,1010],[1217,900,980]], 8, 1, 1.4);
c += path(blue, '#0000ff', SX, sy, 768);
c += [[1171,350,1010],[1173,235,350],[1197,275,980],[1204,228,950],[1208,235,960],[1217,235,970],[1226,290,960],[1230,250,985],[1233,290,930],[1249,300,970],[1251,290,970],[1265,290,610],[1274,290,705],[1245,290,360]].map(([x, a, b]) => path([[x, a], [x, b]], '#0000ff', SX, sy, 768)).join('');
c += path(band([[1217,230,300],[1270,218,310],[1300,222,315],[1340,225,318],[1405,215,318],[1450,220,310],[1500,212,308],[1558,225,312]], 8, .9), '#0000ff', SX, sy, 768);
const bars = (xs, a, b) => xs.map(x => path([[x, a], [x, b]], '#00ff00', SX, sy, 768)).join('');
const run = (a, b, s) => { const o = []; for (let x = a; x <= b; x += s) if (s < 2 || rnd() > .25) o.push(x + (s > 2 ? rnd() * 2 : 0)); return o; };
c += bars([878,888,891,894,898,901,...run(906, 920, 3),...run(921, 966, 1.5),...run(968, 1012, 2.1),1013,1057,1073], 555, 635);
c += bars([1118,1133,1137,1141,1150,1160,1165,...run(1172, 1200, 2.2),...run(1205, 1230, 1.6),...run(1232, 1285, 3),1300,1396], 476, 555);
c += bars([1405,1415,1443,1454,1458,1462,...run(1466, 1476, 3),...run(1480, 1526, 1.6),...run(1528, 1542, 2.1),1556], 395, 476);
c += path([[805,635],[1014,635]], '#00ff00', SX, sy, 768) + path([[920,555],[1236,555]], '#00ff00', SX, sy, 768) + path([[1172,476],[1545,476]], '#00ff00', SX, sy, 768) + path([[1460,395],[1558,395]], '#00ff00', SX, sy, 768);
document.getElementById('chart2').innerHTML = c;
</script>
</body>
</html>
